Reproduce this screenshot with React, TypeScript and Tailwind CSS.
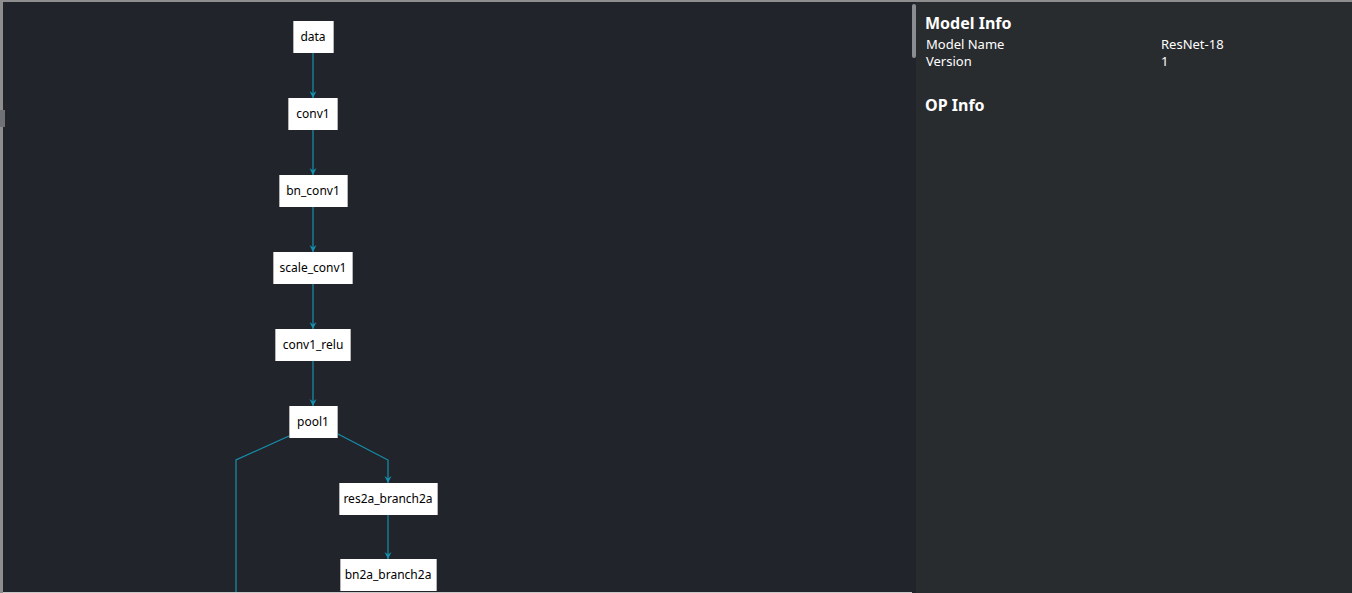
import React from "react";

type Node = { id: string; cx: number; top: number; w: number };

const NODES: Node[] = [
  { id: "data", cx: 310, top: 19, w: 41 },
  { id: "conv1", cx: 310, top: 96, w: 50 },
  { id: "bn_conv1", cx: 310, top: 173, w: 69 },
  { id: "scale_conv1", cx: 310, top: 250, w: 80 },
  { id: "conv1_relu", cx: 310, top: 327, w: 76 },
  { id: "pool1", cx: 310, top: 404, w: 49 },
  { id: "res2a_branch2a", cx: 385, top: 481, w: 99 },
  { id: "bn2a_branch2a", cx: 385, top: 557, w: 97 },
];

const NODE_H = 32;
const EDGE = "#1591ad";

// polyline points, arrow drawn at the last point
const EDGES: { pts: [number, number][]; arrow: boolean }[] = [
  { pts: [[310, 51], [310, 96]], arrow: true },
  { pts: [[310, 128], [310, 173]], arrow: true },
  { pts: [[310, 205], [310, 250]], arrow: true },
  { pts: [[310, 282], [310, 327]], arrow: true },
  { pts: [[310, 359], [310, 404]], arrow: true },
  { pts: [[286, 434], [233, 458], [233, 600]], arrow: false },
  { pts: [[335, 432], [385, 458], [385, 481]], arrow: true },
  { pts: [[385, 513], [385, 557]], arrow: true },
];

function Graph() {
  return (
    <div className="relative flex-1 overflow-hidden bg-[#21242b] border-b border-[#c8c8c8]">
      <svg className="absolute inset-0" width="909" height="600">
        {EDGES.map((e, i) => {
          const [x, y] = e.pts[e.pts.length - 1];
          return (
            <g key={i}>
              <polyline
                points={e.pts.map((p) => p.join(",")).join(" ")}
                fill="none"
                stroke={EDGE}
                strokeWidth="1.2"
              />
              {e.arrow && (
                <path
                  d={`M${x - 3.5},${y - 7} L${x},${y} L${x + 3.5},${y - 7} L${x},${y - 4.5} Z`}
                  fill={EDGE}
                />
              )}
            </g>
          );
        })}
      </svg>
      {NODES.map((n) => (
        <div
          key={n.id}
          className="absolute flex items-center justify-center bg-white border-x border-[#b4b4b4] text-[12px] text-black"
          style={{ left: n.cx - n.w / 2, top: n.top, width: n.w, height: NODE_H }}
        >
          {n.id}
        </div>
      ))}
    </div>
  );
}

export default function App() {
  return (
    <div
      className="relative w-[1352px] h-[593px]"
      style={{ fontFamily: '"Noto Sans", "Open Sans", sans-serif' }}
    >
      <div className="flex h-full overflow-hidden border-t-2 border-l-[3px] border-[#8e8e8e] bg-[#21242b]">
        <Graph />
        <div className="w-[4px] bg-[#21242b] pt-[2px]">
          <div className="h-[54px] rounded-full bg-[#8a8d92]" />
        </div>
        <div className="w-[436px] bg-[#292c2f] px-[9px] pt-[10px] text-white">
          <h2 className="text-[16px] font-bold leading-[22px]">Model Info</h2>
          <div className="mt-[2px] grid grid-cols-[235px_1fr] text-[13px] leading-[17px] pl-px">
            <span>Model Name</span>
            <span>ResNet-18</span>
            <span>Version</span>
            <span>1</span>
          </div>
          <h2 className="mt-[24px] text-[16px] font-bold leading-[22px]">OP Info</h2>
        </div>
      </div>
      <div className="absolute left-0 top-[110px] h-[17px] w-[5px] bg-[#6f7176]" />
    </div>
  );
}
